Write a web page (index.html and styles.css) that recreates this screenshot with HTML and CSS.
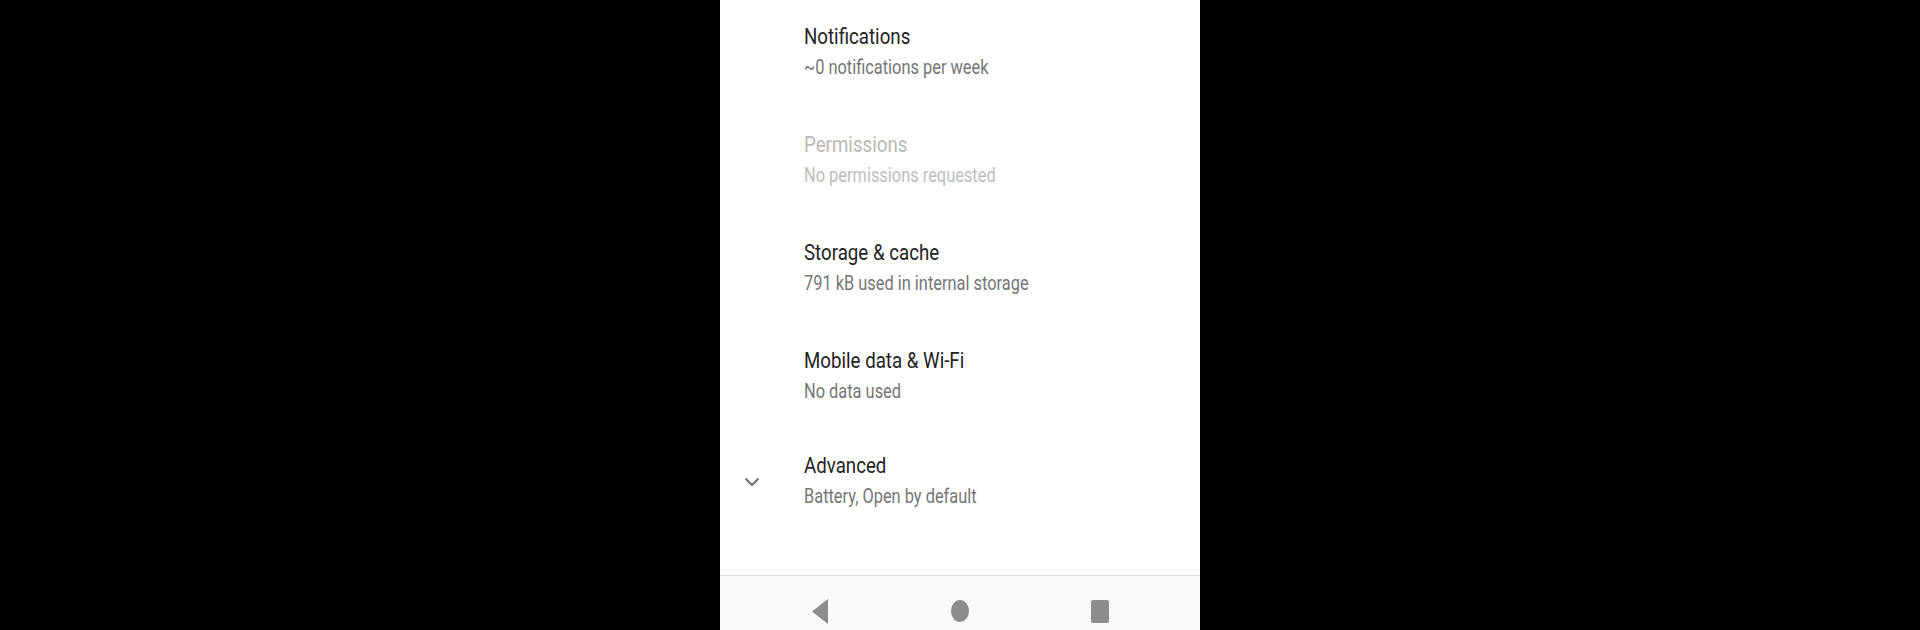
FILE: index.html
```html
<!DOCTYPE html>
<html>
<head>
<meta charset="utf-8">
<link rel="stylesheet" href="styles.css">
</head>
<body>
<div class="screen">
  <div class="list">
    <div class="row">
      <div class="icon"></div>
      <div class="text">
        <div class="title">Notifications</div>
        <div class="summary">~0 notifications per week</div>
      </div>
    </div>
    <div class="row disabled">
      <div class="icon"></div>
      <div class="text">
        <div class="title">Permissions</div>
        <div class="summary">No permissions requested</div>
      </div>
    </div>
    <div class="row">
      <div class="icon"></div>
      <div class="text">
        <div class="title">Storage &amp; cache</div>
        <div class="summary">791 kB used in internal storage</div>
      </div>
    </div>
    <div class="row">
      <div class="icon"></div>
      <div class="text">
        <div class="title">Mobile data &amp; Wi-Fi</div>
        <div class="summary">No data used</div>
      </div>
    </div>
    <div class="row advanced">
      <div class="icon">
        <svg width="16" height="10" viewBox="0 0 16 10"><path d="M1.5 1.5 L8 8 L14.5 1.5" fill="none" stroke="#707070" stroke-width="2"/></svg>
      </div>
      <div class="text">
        <div class="title">Advanced</div>
        <div class="summary">Battery, Open by default</div>
      </div>
    </div>
  </div>
  <div class="nav">
    <div class="slot">
      <svg width="16" height="25" viewBox="0 0 16 25"><path d="M16 0 L16 25 L0 12.5 Z" fill="#8c8c8c"/></svg>
    </div>
    <div class="slot">
      <svg width="18" height="22" viewBox="0 0 18 22"><ellipse cx="9" cy="11" rx="9" ry="11" fill="#8c8c8c"/></svg>
    </div>
    <div class="slot">
      <svg width="18" height="23" viewBox="0 0 18 23"><rect x="0" y="0" width="18" height="23" rx="2" fill="#8c8c8c"/></svg>
    </div>
  </div>
</div>
</body>
</html>
```
FILE: styles.css
```css
html, body {
  margin: 0;
  padding: 0;
  background: #000;
  height: 630px;
  overflow: hidden;
}
body {
  display: flex;
  justify-content: center;
  font-family: Roboto, "Noto Sans", sans-serif;
}
.screen {
  width: 480px;
  height: 630px;
  background: #fff;
  overflow: hidden;
  display: flex;
  flex-direction: column;
}
.list {
  height: 575px;
  flex: none;
}
.row {
  height: 108px;
  box-sizing: border-box;
  padding-top: 23px;
  display: flex;
  align-items: flex-start;
}
.row.advanced {
  height: 107px;
  padding-top: 20px;
  padding-bottom: 27px;
}
.row.advanced .icon {
  align-self: center;
  padding-top: 0;
}
.icon {
  width: 64px;
  margin-right: 20px;
  flex: none;
  display: flex;
  justify-content: center;
  align-items: center;
}
.text {
  transform: scaleX(0.85);
  transform-origin: left center;
  white-space: nowrap;
}
.title {
  font-size: 22px;
  line-height: 28px;
  color: #222;
}
.summary {
  font-size: 19.3px;
  line-height: 29px;
  margin-top: 2px;
  color: #757575;
}
.disabled .title {
  color: #b9b9b9;
}
.disabled .summary {
  color: #bdbdbd;
}
.nav {
  flex: none;
  height: 70px;
  border-top: 1px solid #dedede;
  background: #f9f9f9;
  display: flex;
  align-items: center;
  padding-left: 80px;
  gap: 100px;
}
.slot {
  width: 40px;
  display: flex;
  justify-content: center;
  align-items: center;
}
.slot svg {
  display: block;
}
```
